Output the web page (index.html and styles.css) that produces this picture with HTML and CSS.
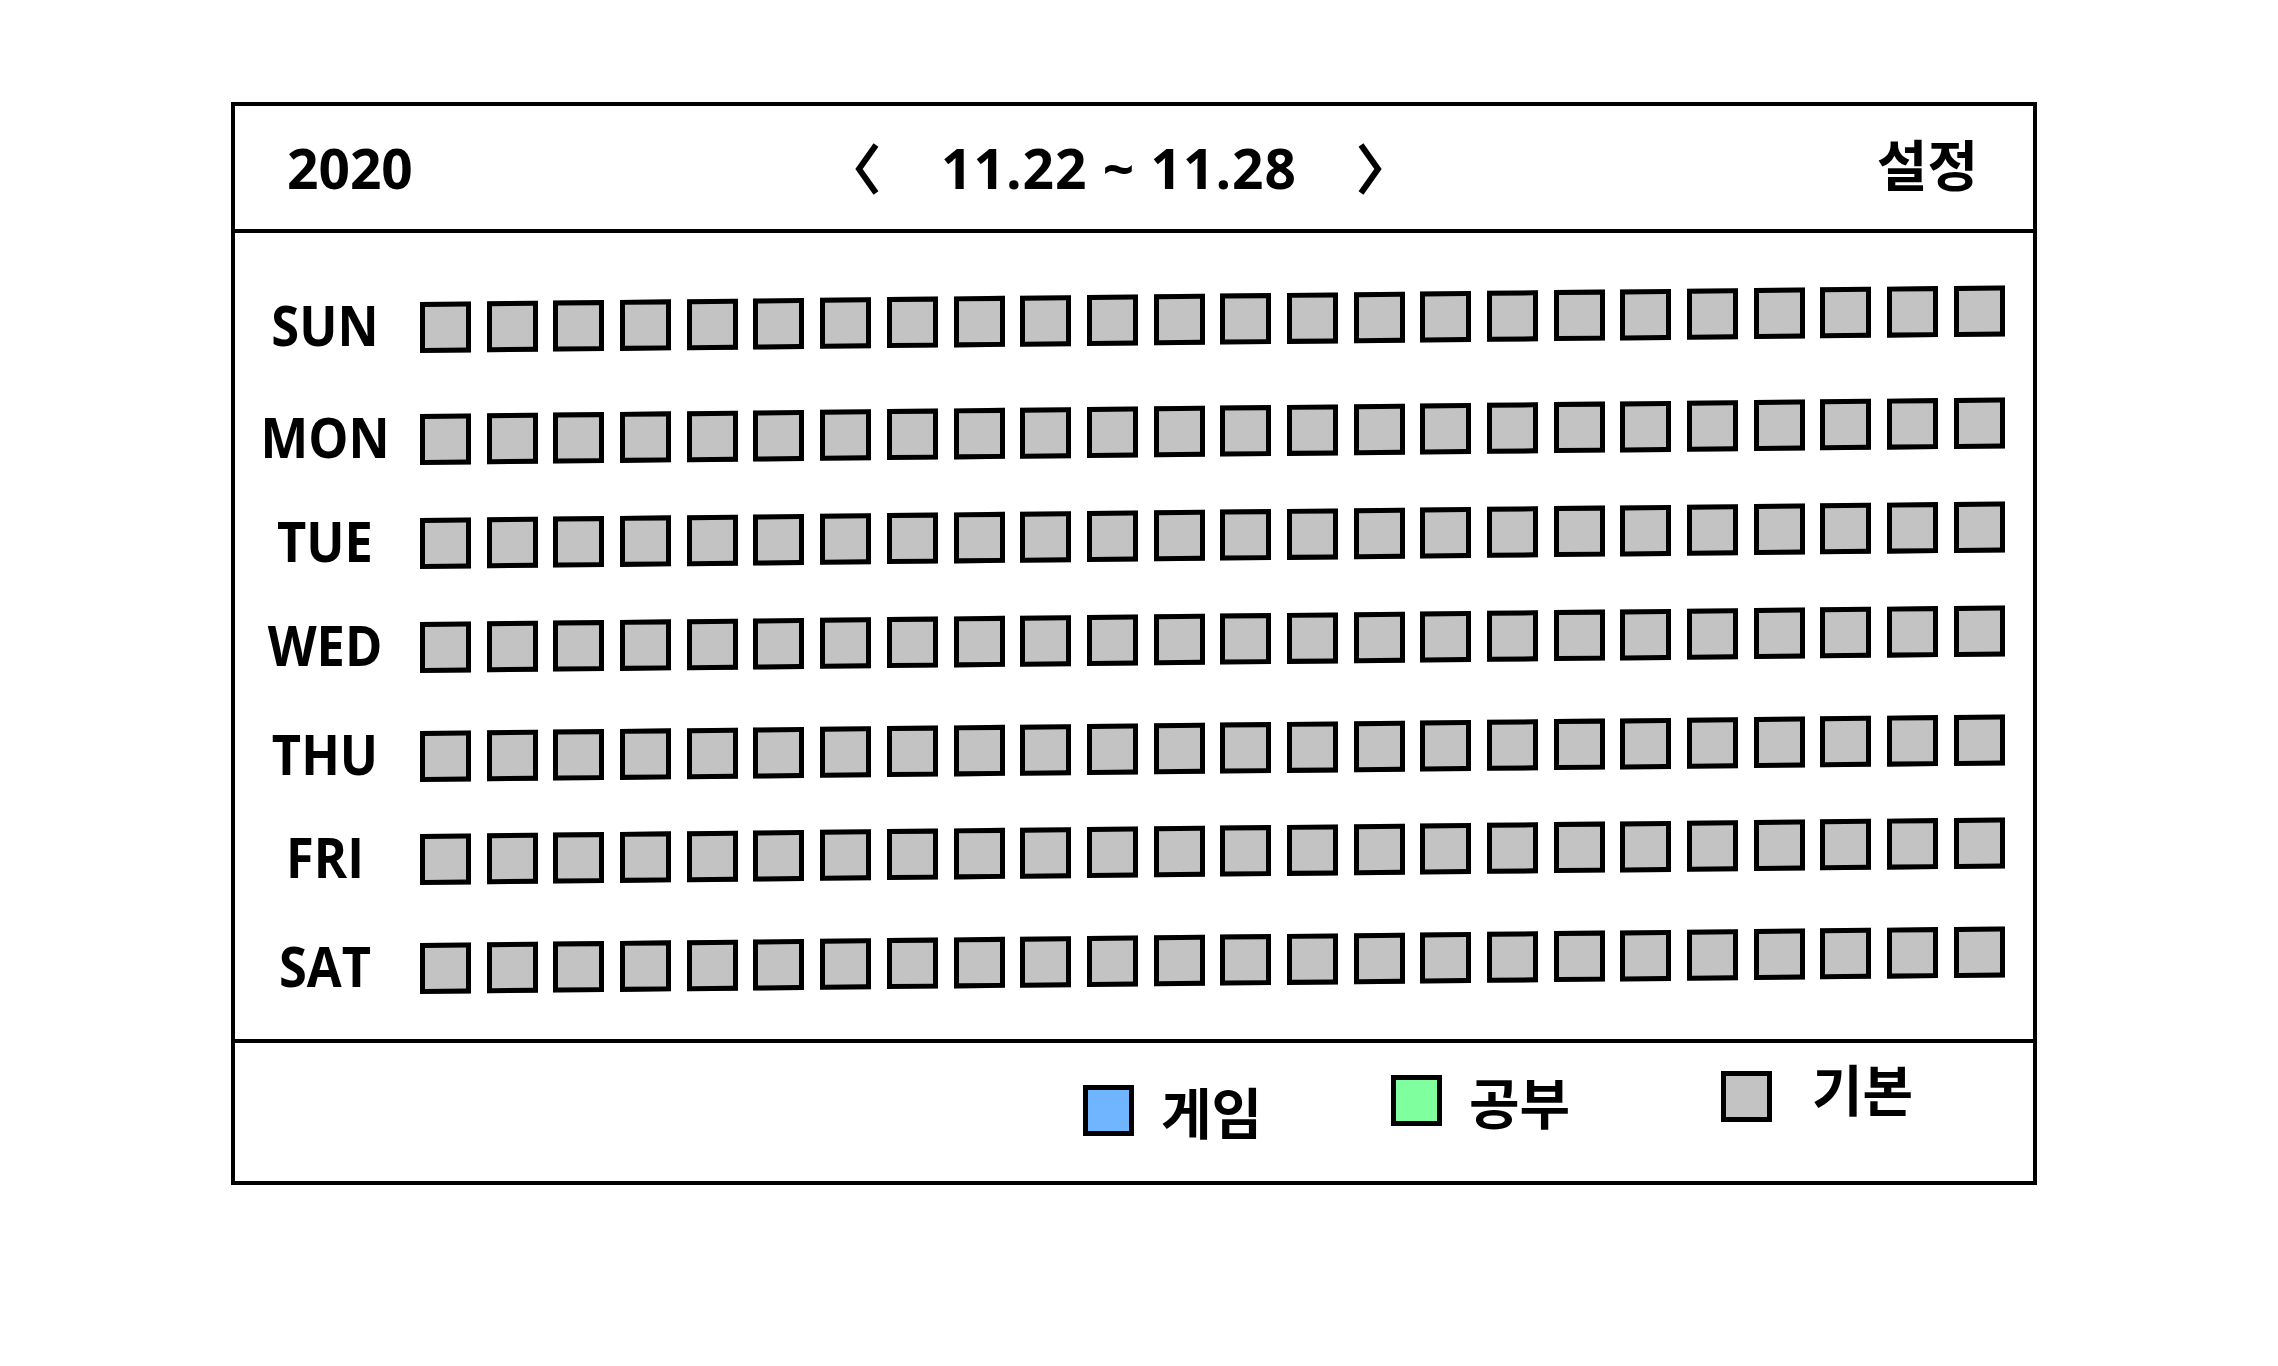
FILE: index.html
```html
<!DOCTYPE html>
<html>
<head>
  <meta charset="utf-8">
  <title>주간 기록</title>
  <link rel="stylesheet" href="styles.css">
</head>
<body>
<div class="planner">
  <div class="planner-head">
    <div class="year">2020</div>
    <div class="week-nav">
      <svg class="chevron" viewBox="0 0 24 52"><polyline points="21,2 4,26 21,50" /></svg>
      <span class="week-range">11.22 ~ 11.28</span>
      <svg class="chevron" viewBox="0 0 24 52"><polyline points="3,2 20,26 3,50" /></svg>
    </div>
    <div class="settings">설정</div>
  </div>

  <div class="planner-body">
    <div class="day-row">
      <span class="day-label">SUN</span>
      <div class="cells"><span class="cell"></span><span class="cell"></span><span class="cell"></span><span class="cell"></span><span class="cell"></span><span class="cell"></span><span class="cell"></span><span class="cell"></span><span class="cell"></span><span class="cell"></span><span class="cell"></span><span class="cell"></span><span class="cell"></span><span class="cell"></span><span class="cell"></span><span class="cell"></span><span class="cell"></span><span class="cell"></span><span class="cell"></span><span class="cell"></span><span class="cell"></span><span class="cell"></span><span class="cell"></span><span class="cell"></span></div>
    </div>
    <div class="day-row">
      <span class="day-label">MON</span>
      <div class="cells"><span class="cell"></span><span class="cell"></span><span class="cell"></span><span class="cell"></span><span class="cell"></span><span class="cell"></span><span class="cell"></span><span class="cell"></span><span class="cell"></span><span class="cell"></span><span class="cell"></span><span class="cell"></span><span class="cell"></span><span class="cell"></span><span class="cell"></span><span class="cell"></span><span class="cell"></span><span class="cell"></span><span class="cell"></span><span class="cell"></span><span class="cell"></span><span class="cell"></span><span class="cell"></span><span class="cell"></span></div>
    </div>
    <div class="day-row">
      <span class="day-label">TUE</span>
      <div class="cells"><span class="cell"></span><span class="cell"></span><span class="cell"></span><span class="cell"></span><span class="cell"></span><span class="cell"></span><span class="cell"></span><span class="cell"></span><span class="cell"></span><span class="cell"></span><span class="cell"></span><span class="cell"></span><span class="cell"></span><span class="cell"></span><span class="cell"></span><span class="cell"></span><span class="cell"></span><span class="cell"></span><span class="cell"></span><span class="cell"></span><span class="cell"></span><span class="cell"></span><span class="cell"></span><span class="cell"></span></div>
    </div>
    <div class="day-row">
      <span class="day-label">WED</span>
      <div class="cells"><span class="cell"></span><span class="cell"></span><span class="cell"></span><span class="cell"></span><span class="cell"></span><span class="cell"></span><span class="cell"></span><span class="cell"></span><span class="cell"></span><span class="cell"></span><span class="cell"></span><span class="cell"></span><span class="cell"></span><span class="cell"></span><span class="cell"></span><span class="cell"></span><span class="cell"></span><span class="cell"></span><span class="cell"></span><span class="cell"></span><span class="cell"></span><span class="cell"></span><span class="cell"></span><span class="cell"></span></div>
    </div>
    <div class="day-row">
      <span class="day-label">THU</span>
      <div class="cells"><span class="cell"></span><span class="cell"></span><span class="cell"></span><span class="cell"></span><span class="cell"></span><span class="cell"></span><span class="cell"></span><span class="cell"></span><span class="cell"></span><span class="cell"></span><span class="cell"></span><span class="cell"></span><span class="cell"></span><span class="cell"></span><span class="cell"></span><span class="cell"></span><span class="cell"></span><span class="cell"></span><span class="cell"></span><span class="cell"></span><span class="cell"></span><span class="cell"></span><span class="cell"></span><span class="cell"></span></div>
    </div>
    <div class="day-row">
      <span class="day-label">FRI</span>
      <div class="cells"><span class="cell"></span><span class="cell"></span><span class="cell"></span><span class="cell"></span><span class="cell"></span><span class="cell"></span><span class="cell"></span><span class="cell"></span><span class="cell"></span><span class="cell"></span><span class="cell"></span><span class="cell"></span><span class="cell"></span><span class="cell"></span><span class="cell"></span><span class="cell"></span><span class="cell"></span><span class="cell"></span><span class="cell"></span><span class="cell"></span><span class="cell"></span><span class="cell"></span><span class="cell"></span><span class="cell"></span></div>
    </div>
    <div class="day-row">
      <span class="day-label">SAT</span>
      <div class="cells"><span class="cell"></span><span class="cell"></span><span class="cell"></span><span class="cell"></span><span class="cell"></span><span class="cell"></span><span class="cell"></span><span class="cell"></span><span class="cell"></span><span class="cell"></span><span class="cell"></span><span class="cell"></span><span class="cell"></span><span class="cell"></span><span class="cell"></span><span class="cell"></span><span class="cell"></span><span class="cell"></span><span class="cell"></span><span class="cell"></span><span class="cell"></span><span class="cell"></span><span class="cell"></span><span class="cell"></span></div>
    </div>
  </div>

  <div class="planner-foot">
    <div class="legend-item legend-game">
      <span class="swatch"></span>
      <span class="legend-name">게임</span>
    </div>
    <div class="legend-item legend-study">
      <span class="swatch"></span>
      <span class="legend-name">공부</span>
    </div>
    <div class="legend-item legend-base">
      <span class="swatch"></span>
      <span class="legend-name">기본</span>
    </div>
  </div>
</div>
</body>
</html>
```

FILE: styles.css
```css
* {
  box-sizing: border-box;
}

body {
  margin: 0;
  background: #fff;
  color: #000;
  font-family: "Open Sans", "Noto Sans CJK KR", sans-serif;
  font-weight: 700;
}

.planner {
  display: flex;
  flex-direction: column;
  width: 1806px;
  height: 1083px;
  margin: 102px 0 0 231px;
  border: 4px solid #000;
}

/* top bar: year, week switcher, settings */
.planner-head {
  display: flex;
  align-items: center;
  flex-shrink: 0;
  height: 127px;
  border-bottom: 4px solid #000;
}

.year {
  width: 620px;
  padding-left: 52px;
  font-size: 55px;
}

.week-nav {
  display: flex;
  align-items: center;
}

.chevron {
  display: block;
  width: 24px;
  height: 52px;
  margin-top: 3px;
}

.chevron polyline {
  fill: none;
  stroke: #000;
  stroke-width: 6;
}

.week-range {
  margin: 0 61px 0 62px;
  font-size: 55px;
  letter-spacing: 1px;
}

.settings {
  margin-left: auto;
  padding: 0 55px 12px 0;
  font-family: "Noto Sans CJK KR", sans-serif;
  font-size: 55px;
}

/* week grid */
.planner-body {
  display: flex;
  flex-direction: column;
  flex: 1;
  padding-top: 69px;
  border-bottom: 4px solid #000;
}

.day-row {
  display: flex;
  align-items: flex-start;
}

/* the rows were spaced by hand, not evenly */
.day-row:nth-child(2) { margin-top: 61px; }
.day-row:nth-child(3) { margin-top: 53px; }
.day-row:nth-child(4) { margin-top: 53px; }
.day-row:nth-child(5) { margin-top: 58px; }
.day-row:nth-child(6) { margin-top: 52px; }
.day-row:nth-child(7) { margin-top: 58px; }

.day-label {
  width: 180px;
  text-align: center;
  font-size: 55px;
  line-height: 46px;
  /* the sketch used a narrower face than Open Sans */
  transform: scaleX(0.92);
}

.cells {
  display: flex;
  gap: 15.7px;
  margin-left: 5px;
  /* rows climb a little to the right */
  transform: skewY(-0.6deg);
  transform-origin: 0 50%;
}

.cell {
  width: 51px;
  height: 51px;
  border: 5px solid #000;
  background: #c3c3c3;
}

/* legend */
.planner-foot {
  display: flex;
  align-items: flex-start;
  flex-shrink: 0;
  height: 138px;
  padding-left: 848px;
}

.legend-item {
  display: flex;
  align-items: center;
}

.swatch {
  width: 51px;
  height: 51px;
  margin-right: 27px;
  border: 5px solid #000;
  background: #c3c3c3;
}

.legend-name {
  font-family: "Noto Sans CJK KR", sans-serif;
  font-size: 55px;
  line-height: 51px;
}

.legend-game {
  width: 308px;
  margin-top: 42px;
}

.legend-game .swatch {
  background: #70b5ff;
}

.legend-study {
  width: 330px;
  margin-top: 32px;
}

.legend-study .swatch {
  background: #80ff9f;
}

.legend-base {
  margin-top: 28px;
}

.legend-base .swatch {
  margin-right: 40px;
}

.legend-base .legend-name {
  margin-top: -18px;
}
```
